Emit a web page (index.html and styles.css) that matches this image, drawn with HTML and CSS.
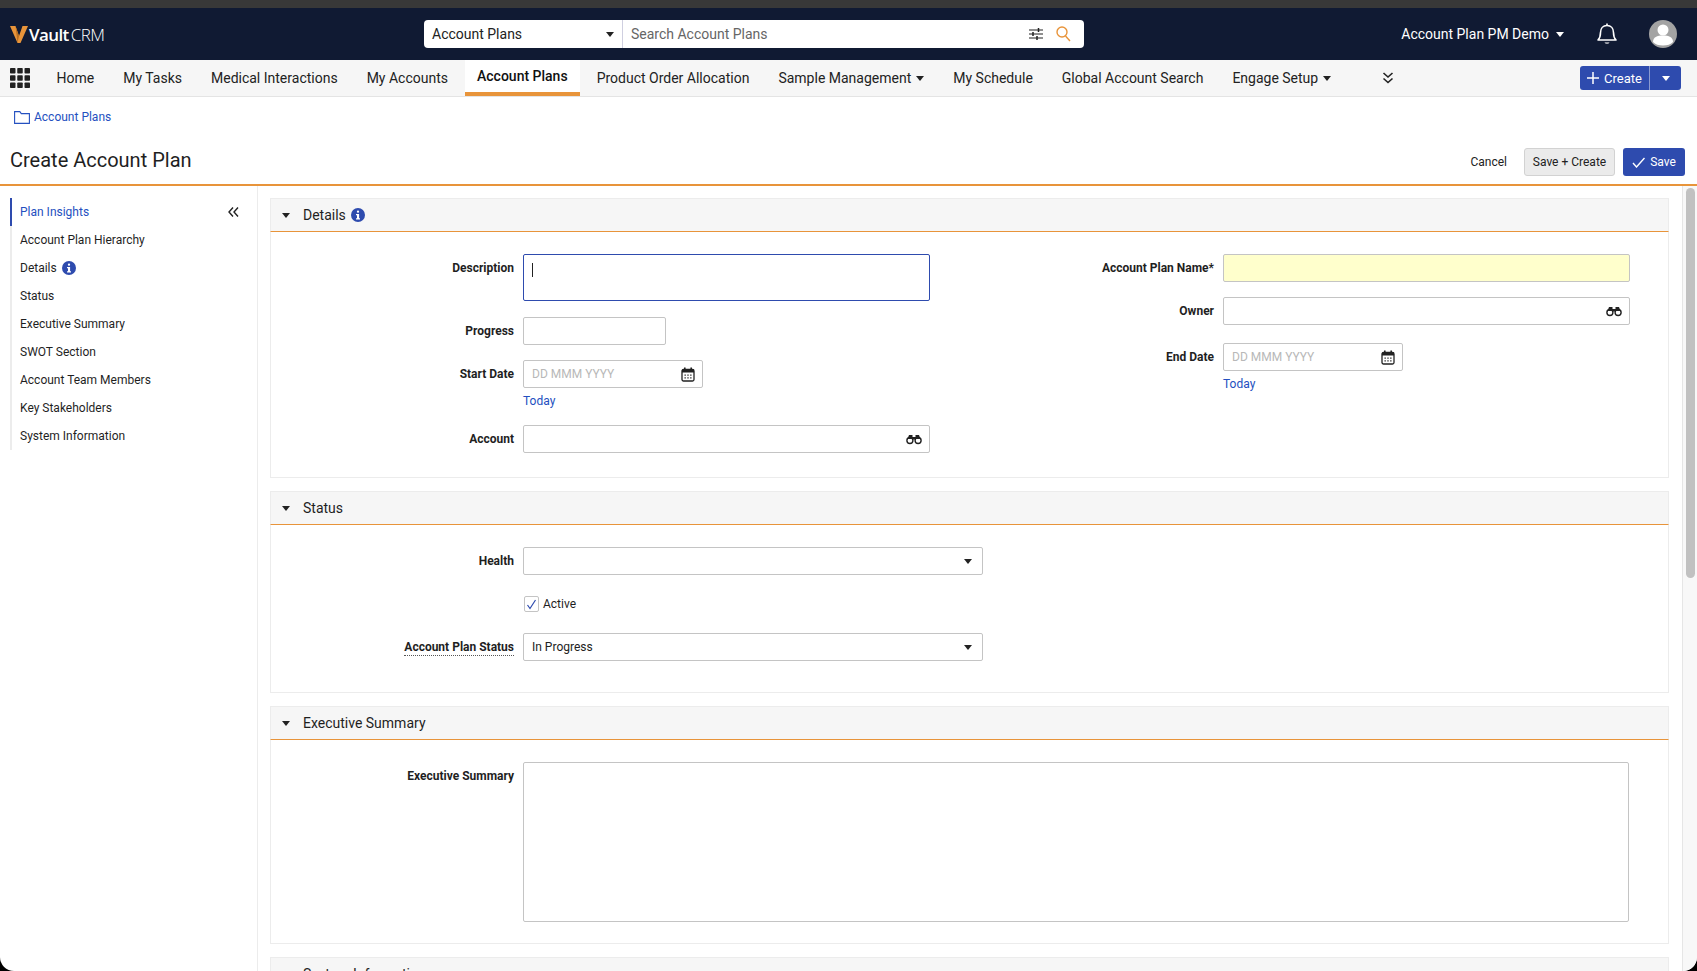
FILE: index.html
```html
<!DOCTYPE html>
<html lang="en">

<head>
    <meta charset="UTF-8">
    <title>Create Account Plan</title>
    <link rel="stylesheet" href="styles.css">
</head>

<body>
    <svg class="defs" width="0" height="0">
        <symbol id="ic-info" viewBox="0 0 14 14">
            <circle cx="7" cy="7" r="7" fill="#2e4bae"/>
            <rect x="5.9" y="2.5" width="2.2" height="2.2" rx="1" fill="#fff"/>
            <path d="M5 6h3.1v4.2H9v1.3H5v-1.3h1V7.300H5z" fill="#fff"/>
        </symbol>
        <symbol id="ic-binoculars" viewBox="0 0 16 12">
            <circle cx="3.900" cy="7.500" r="3" fill="none" stroke="#222" stroke-width="1.400"/>
            <circle cx="12.100" cy="7.500" r="3" fill="none" stroke="#222" stroke-width="1.400"/>
            <path d="M1.500 6 3 2h3.500v4zM14.500 6 13 2H9.500v4z" fill="#222"/>
            <rect x="6" y="4" width="4" height="2.500" fill="#222"/>
        </symbol>
        <symbol id="ic-calendar" viewBox="0 0 14 15">
            <rect x="1" y="2.500" width="12" height="11.500" rx="1.500" fill="none" stroke="#222" stroke-width="1.300"/>
            <rect x="1" y="2.500" width="12" height="3" fill="#222"/>
            <rect x="3" y="0.500" width="1.600" height="3" fill="#222"/>
            <rect x="9.400" y="0.500" width="1.600" height="3" fill="#222"/>
            <path d="M3.500 7.500h1.300v1.300H3.500zM6.350 7.500h1.300v1.300h-1.300zM9.200 7.500h1.300v1.300H9.200zM3.500 10.200h1.300v1.300H3.500zM6.350 10.200h1.300v1.300h-1.300zM9.200 10.200h1.300v1.300H9.200z" fill="#222"/>
        </symbol>
    </svg>

    <div class="app">
        <div class="chrome-strip"></div>

        <header class="topbar">
            <div class="logo">
                <svg class="logo-mark" width="18" height="18" viewBox="0 0 18 18">
                    <path d="M0 1h5.500L9 11l3.500-10H18l-7.500 17h-3z" fill="#e8943a"/>
                    <path d="M5.500 1 9 11l-1.500 7z" fill="#b96f22"/>
                </svg>
                <span class="logo-vault">Vault</span><span class="logo-crm">CRM</span>
            </div>
            <div class="search">
                <div class="search-scope">Account Plans <span class="caret-down"></span></div>
                <div class="search-input">
                    <span class="search-hint">Search Account Plans</span>
                    <svg class="search-filter" width="14" height="14" viewBox="0 0 14 14">
                        <path d="M0 3h14M0 7h14M0 11h14" stroke="#222" stroke-width="1.200"/>
                        <path d="M9.500 1v4M4 5v4M8 9v4" stroke="#222" stroke-width="1.500"/>
                    </svg>
                    <svg class="search-glass" width="15" height="16" viewBox="0 0 15 16">
                        <circle cx="6" cy="6" r="5" fill="none" stroke="#e8943a" stroke-width="1.400"/>
                        <path d="m9.500 10 4.500 5" stroke="#e8943a" stroke-width="1.400"/>
                    </svg>
                </div>
            </div>
            <div class="user">
                <span class="user-name">Account Plan PM Demo</span>
                <span class="caret-down caret-white"></span>
                <svg class="bell" width="20" height="22" viewBox="0 0 20 22">
                    <path d="M1 17c2-2 2.500-3.500 2.500-7.500C3.500 5.500 6 2.500 10 2.500s6.500 3 6.500 7c0 4 .5 5.500 2.500 7.500z" fill="none" stroke="#fff" stroke-width="1.600" stroke-linejoin="round"/>
                    <path d="M10 .5v2" stroke="#fff" stroke-width="1.600"/>
                    <path d="M7.500 19.500c1 1.600 4 1.600 5 0z" fill="#fff"/>
                </svg>
                <svg class="avatar" width="28" height="28" viewBox="0 0 28 28">
                    <circle cx="14" cy="14" r="14" fill="#a3a3a3"/>
                    <circle cx="14" cy="10" r="5.500" fill="#fff"/>
                    <path d="M4 22c0-5 4-6.500 10-6.500S24 17 24 22c-2 2.500-6 3.500-10 3.500S6 24.500 4 22z" fill="#fff"/>
                </svg>
            </div>
        </header>

        <nav class="navbar">
            <svg class="waffle" width="20" height="20" viewBox="0 0 20 20" fill="#222">
                <rect width="5.500" height="5.500" rx=".8"/><rect x="7.250" width="5.500" height="5.500" rx=".8"/><rect x="14.500" width="5.500" height="5.500" rx=".8"/>
                <rect y="7.250" width="5.500" height="5.500" rx=".8"/><rect x="7.250" y="7.250" width="5.500" height="5.500" rx=".8"/><rect x="14.500" y="7.250" width="5.500" height="5.500" rx=".8"/>
                <rect y="14.500" width="5.500" height="5.500" rx=".8"/><rect x="7.250" y="14.500" width="5.500" height="5.500" rx=".8"/><rect x="14.500" y="14.500" width="5.500" height="5.500" rx=".8"/>
            </svg>
            <a class="nav-item">Home</a>
            <a class="nav-item">My Tasks</a>
            <a class="nav-item">Medical Interactions</a>
            <a class="nav-item">My Accounts</a>
            <a class="nav-item active">Account Plans</a>
            <a class="nav-item">Product Order Allocation</a>
            <a class="nav-item">Sample Management <span class="caret-down"></span></a>
            <a class="nav-item">My Schedule</a>
            <a class="nav-item">Global Account Search</a>
            <a class="nav-item">Engage Setup <span class="caret-down"></span></a>
            <svg class="nav-more" width="12" height="12" viewBox="0 0 12 12">
                <path d="m1.500 1 4.500 4 4.500-4M1.500 6.500l4.500 4 4.500-4" fill="none" stroke="#222" stroke-width="1.600"/>
            </svg>
            <div class="create-btn">
                <span class="create-main">
                    <svg width="12" height="12" viewBox="0 0 12 12"><path d="M6 0v12M0 6h12" stroke="#fff" stroke-width="1.500"/></svg>
                    Create
                </span>
                <span class="create-drop"><span class="caret-down caret-white"></span></span>
            </div>
        </nav>

        <div class="breadcrumb">
            <svg width="16" height="13" viewBox="0 0 16 13">
                <path d="M.6 12.400V.6h5.200l1.500 2h8.100v9.800z" fill="none" stroke="#2450c0" stroke-width="1.100"/>
            </svg>
            <a class="link">Account Plans</a>
        </div>

        <div class="page-head">
            <h1>Create Account Plan</h1>
            <div class="actions">
                <a class="cancel">Cancel</a>
                <button class="btn-grey">Save + Create</button>
                <button class="btn-blue">
                    <svg width="13" height="11" viewBox="0 0 13 11"><path d="m1 6 3.500 4L12.500 1" fill="none" stroke="#fff" stroke-width="1.400"/></svg>
                    Save
                </button>
            </div>
        </div>

        <div class="content">
            <aside class="sidebar">
                <svg class="collapse" width="11" height="10" viewBox="0 0 11 10">
                    <path d="M5 .5 1 5l4 4.500M10 .5 6 5l4 4.500" fill="none" stroke="#222" stroke-width="1.400"/>
                </svg>
                <ul class="side-list">
                    <li class="active">Plan Insights</li>
                    <li>Account Plan Hierarchy</li>
                    <li>Details <svg class="info" width="14" height="14"><use href="#ic-info"/></svg></li>
                    <li>Status</li>
                    <li>Executive Summary</li>
                    <li>SWOT Section</li>
                    <li>Account Team Members</li>
                    <li>Key Stakeholders</li>
                    <li>System Information</li>
                </ul>
            </aside>

            <main class="main">
                <section class="section">
                    <div class="section-head"><span class="tri"></span>Details <svg class="info" width="14" height="14"><use href="#ic-info"/></svg></div>
                    <div class="section-body details-body">
                        <div class="col">
                            <div class="row row-desc">
                                <label>Description</label>
                                <div class="input desc-box"><span class="text-cursor"></span></div>
                            </div>
                            <div class="row">
                                <label>Progress</label>
                                <input class="input w-progress" type="text">
                            </div>
                            <div class="row row-date">
                                <label>Start Date</label>
                                <div>
                                    <div class="input w-date with-icon">
                                        <span class="hint">DD MMM YYYY</span>
                                        <svg width="14" height="15"><use href="#ic-calendar"/></svg>
                                    </div>
                                    <a class="link today">Today</a>
                                </div>
                            </div>
                            <div class="row">
                                <label>Account</label>
                                <div class="input w-full with-icon">
                                    <span></span>
                                    <svg width="16" height="12"><use href="#ic-binoculars"/></svg>
                                </div>
                            </div>
                        </div>
                        <div class="col">
                            <div class="row">
                                <label>Account Plan Name*</label>
                                <input class="input w-full required" type="text">
                            </div>
                            <div class="row row-owner">
                                <label>Owner</label>
                                <div class="input w-full with-icon">
                                    <span></span>
                                    <svg width="16" height="12"><use href="#ic-binoculars"/></svg>
                                </div>
                            </div>
                            <div class="row">
                                <label>End Date</label>
                                <div>
                                    <div class="input w-date with-icon">
                                        <span class="hint">DD MMM YYYY</span>
                                        <svg width="14" height="15"><use href="#ic-calendar"/></svg>
                                    </div>
                                    <a class="link today">Today</a>
                                </div>
                            </div>
                        </div>
                    </div>
                </section>

                <section class="section">
                    <div class="section-head"><span class="tri"></span>Status</div>
                    <div class="section-body status-body">
                        <div class="row">
                            <label>Health</label>
                            <div class="input w-select with-icon"><span></span><span class="caret-down"></span></div>
                        </div>
                        <div class="row">
                            <label></label>
                            <div class="check-line">
                                <span class="check">
                                    <svg width="11" height="11" viewBox="0 0 11 11"><path d="m1.500 6 2.500 3.500L9.500 1" fill="none" stroke="#2e4bae" stroke-width="1.200"/></svg>
                                </span>
                                Active
                            </div>
                        </div>
                        <div class="row">
                            <label><span class="dotted">Account Plan Status</span></label>
                            <div class="input w-select with-icon"><span>In Progress</span><span class="caret-down"></span></div>
                        </div>
                    </div>
                </section>

                <section class="section">
                    <div class="section-head"><span class="tri"></span>Executive Summary</div>
                    <div class="section-body summary-body">
                        <div class="row row-last">
                            <label>Executive Summary</label>
                            <textarea class="input w-summary"></textarea>
                        </div>
                    </div>
                </section>

                <section class="section">
                    <div class="section-head"><span class="tri"></span>System Information</div>
                </section>
            </main>

            <div class="scrollbar"><div class="thumb"></div></div>
        </div>
    </div>
</body>

</html>
```

FILE: styles.css
```css
* {
    box-sizing: border-box;
    margin: 0;
    padding: 0;
}

html, body {
    height: 100%;
    overflow: hidden;
    background-color: #000;
}

body {
    font-family: Roboto, "Liberation Sans", sans-serif;
    font-size: 12px;
    color: #1f1f1f;
}

.defs {
    position: absolute;
}

.app {
    height: 971px;
    display: flex;
    flex-direction: column;
    background-color: #fff;
    border-radius: 0 0 14px 14px;
    overflow: hidden;
}

.chrome-strip {
    height: 8px;
    flex: none;
    background-color: #383838;
}

/* barra superior */
.topbar {
    height: 52px;
    flex: none;
    display: flex;
    align-items: center;
    background-color: #101a33;
    color: #fff;
    padding: 0 20px 0 10px;
}

.logo {
    width: 414px;
    display: flex;
    align-items: center;
    font-size: 17px;
    flex: none;
}

.logo-mark {
    margin-right: 1px;
}

.logo-vault {
    font-family: "Open Sans", sans-serif;
    font-weight: 600;
    letter-spacing: -0.6px;
}

.logo-crm {
    font-family: "Open Sans", sans-serif;
    font-weight: 300;
    margin-left: 2px;
    letter-spacing: -0.5px;
}

.search {
    width: 660px;
    height: 28px;
    flex: none;
    display: flex;
    background-color: #fff;
    border-radius: 4px;
    color: #222;
    font-size: 14px;
}

.search-scope {
    width: 199px;
    display: flex;
    align-items: center;
    justify-content: space-between;
    padding: 0 8px;
    border-right: 1px solid #cfcfe0;
}

.search-input {
    flex: 1;
    display: flex;
    align-items: center;
    padding: 0 13px 0 8px;
}

.search-hint {
    flex: 1;
    color: #666;
}

.search-filter {
    margin-right: 13px;
}

.user {
    margin-left: auto;
    display: flex;
    align-items: center;
    font-size: 14px;
}

.user-name {
    margin-right: 7px;
}

.bell {
    margin: 0 32px 0 33px;
}

.caret-down {
    display: inline-block;
    width: 0;
    height: 0;
    border-left: 4.5px solid transparent;
    border-right: 4.5px solid transparent;
    border-top: 5px solid #222;
}

.caret-white {
    border-top-color: #fff;
}

/* menu de navegacion */
.navbar {
    height: 37px;
    flex: none;
    display: flex;
    align-items: stretch;
    background-color: #f6f6f6;
    border-bottom: 1px solid #e4e4e4;
    padding: 0 16px 0 10px;
    font-size: 14px;
}

.waffle {
    align-self: center;
    margin-right: 12px;
}

.nav-item {
    display: flex;
    align-items: center;
    gap: 5px;
    padding: 0 12px;
    margin: 0 2.5px;
    white-space: nowrap;
    color: #222;
}

.nav-item.active {
    background-color: #fff;
    border-bottom: 4px solid #e8943a;
    font-weight: 500;
    color: #111;
}

.nav-more {
    align-self: center;
    margin-left: 36px;
}

.create-btn {
    margin-left: auto;
    align-self: center;
    height: 24px;
    display: flex;
    background-color: #2e4bae;
    color: #fff;
    border-radius: 3px;
    font-size: 13px;
}

.create-main {
    width: 70px;
    display: flex;
    align-items: center;
    justify-content: center;
    gap: 5px;
    border-right: 1px solid #8c9bd0;
}

.create-drop {
    width: 31px;
    display: flex;
    align-items: center;
    justify-content: center;
}

/* encabezado de pagina */
.breadcrumb {
    height: 40px;
    flex: none;
    display: flex;
    align-items: center;
    gap: 4px;
    padding: 0 0 0 14px;
}

.link {
    color: #2450c0;
}

.page-head {
    height: 49px;
    flex: none;
    display: flex;
    align-items: flex-start;
    justify-content: space-between;
    padding: 11px 12px 0 10px;
    border-bottom: 2px solid #e8943a;
}

h1 {
    font-size: 20px;
    font-weight: 400;
    line-height: 24px;
}

.actions {
    display: flex;
    align-items: center;
    gap: 8px;
}

.cancel {
    margin-right: 9px;
    color: #222;
}

.actions button {
    height: 28px;
    font-family: inherit;
    font-size: 12px;
    border-radius: 3px;
}

.btn-grey {
    width: 91px;
    background-color: #ebebeb;
    border: 1px solid #d2d2d2;
    color: #222;
}

.btn-blue {
    width: 62px;
    display: flex;
    align-items: center;
    justify-content: center;
    gap: 5px;
    background-color: #2e4bae;
    border: none;
    color: #fff;
}

/* contenido */
.content {
    flex: 1;
    min-height: 0;
    display: flex;
}

.sidebar {
    width: 258px;
    flex: none;
    position: relative;
    padding: 12px 0 0 10px;
    border-right: 1px solid #ececec;
}

.collapse {
    position: absolute;
    top: 21px;
    left: 228px;
}

.side-list {
    list-style: none;
    border-left: 2px solid #ececec;
}

.side-list li {
    height: 28px;
    display: flex;
    align-items: center;
    gap: 5px;
    padding-left: 8px;
    margin-left: -2px;
    border-left: 2px solid transparent;
}

.side-list li.active {
    color: #2450c0;
    border-left-color: #2e4bae;
}

.main {
    flex: 1;
    min-width: 0;
    padding: 12px 13px 0 12px;
    overflow: hidden;
}

.section {
    margin-bottom: 13px;
}

.section-head {
    height: 34px;
    display: flex;
    align-items: center;
    gap: 5px;
    background-color: #f6f6f6;
    border: 1px solid #ececec;
    border-bottom: 1px solid #e8943a;
    padding-left: 11px;
    font-size: 14px;
}

.tri {
    width: 0;
    height: 0;
    border-left: 4.5px solid transparent;
    border-right: 4.5px solid transparent;
    border-top: 5px solid #222;
    margin-right: 8px;
}

.section-body {
    border: 1px solid #ececec;
    border-top: none;
    padding-top: 22px;
}

.details-body {
    display: grid;
    grid-template-columns: 700px 1fr;
    height: 246px;
}

.status-body {
    height: 168px;
}

.summary-body {
    height: 204px;
}

/* filas del formulario */
.row {
    display: grid;
    grid-template-columns: 243px 1fr;
    column-gap: 9px;
    margin-bottom: 15px;
}

.col .row {
    grid-template-columns: 243px 1fr;
}

.row label {
    text-align: right;
    font-weight: 700;
    line-height: 28px;
}

.row-desc {
    margin-bottom: 16px;
}

.row-owner {
    margin-bottom: 18px;
}

.row-last {
    margin-bottom: 0;
}

.dotted {
    border-bottom: 1px dotted #555;
    padding-bottom: 1px;
}

.input {
    display: block;
    height: 28px;
    border: 1px solid #c4c4c4;
    border-radius: 2px;
    background-color: #fff;
    font-family: inherit;
    font-size: 12px;
    color: #222;
}

.with-icon {
    display: flex;
    align-items: center;
    justify-content: space-between;
    padding: 0 7px 0 8px;
}

.hint {
    color: #b8b8b8;
}

.desc-box {
    width: 407px;
    height: 47px;
    border-color: #2e4bae;
    padding: 8px 8px 0;
}

.text-cursor {
    display: block;
    width: 1px;
    height: 14px;
    background-color: #222;
}

.w-progress {
    width: 143px;
}

.w-date {
    width: 180px;
}

.w-full {
    width: 407px;
}

.w-select {
    width: 460px;
}

.w-select .caret-down {
    margin-right: 3px;
}

.w-summary {
    width: 1106px;
    height: 160px;
    resize: none;
}

.required {
    background-color: #ffffcc;
}

.today {
    display: block;
    padding-top: 5px;
    line-height: 17px;
}

.check-line {
    display: flex;
    align-items: center;
    gap: 4px;
    height: 28px;
    padding-left: 1px;
}

.check {
    width: 15px;
    height: 16px;
    display: flex;
    align-items: center;
    justify-content: center;
    border: 1px solid #c4c4c4;
    border-radius: 2px;
}

.scrollbar {
    width: 15px;
    flex: none;
    background-color: #f8f8f8;
    border-left: 1px solid #e6e6e6;
    padding: 2px 2px 0 3px;
}

.thumb {
    height: 390px;
    background-color: #c1c1c1;
    border-radius: 5px;
}
```
